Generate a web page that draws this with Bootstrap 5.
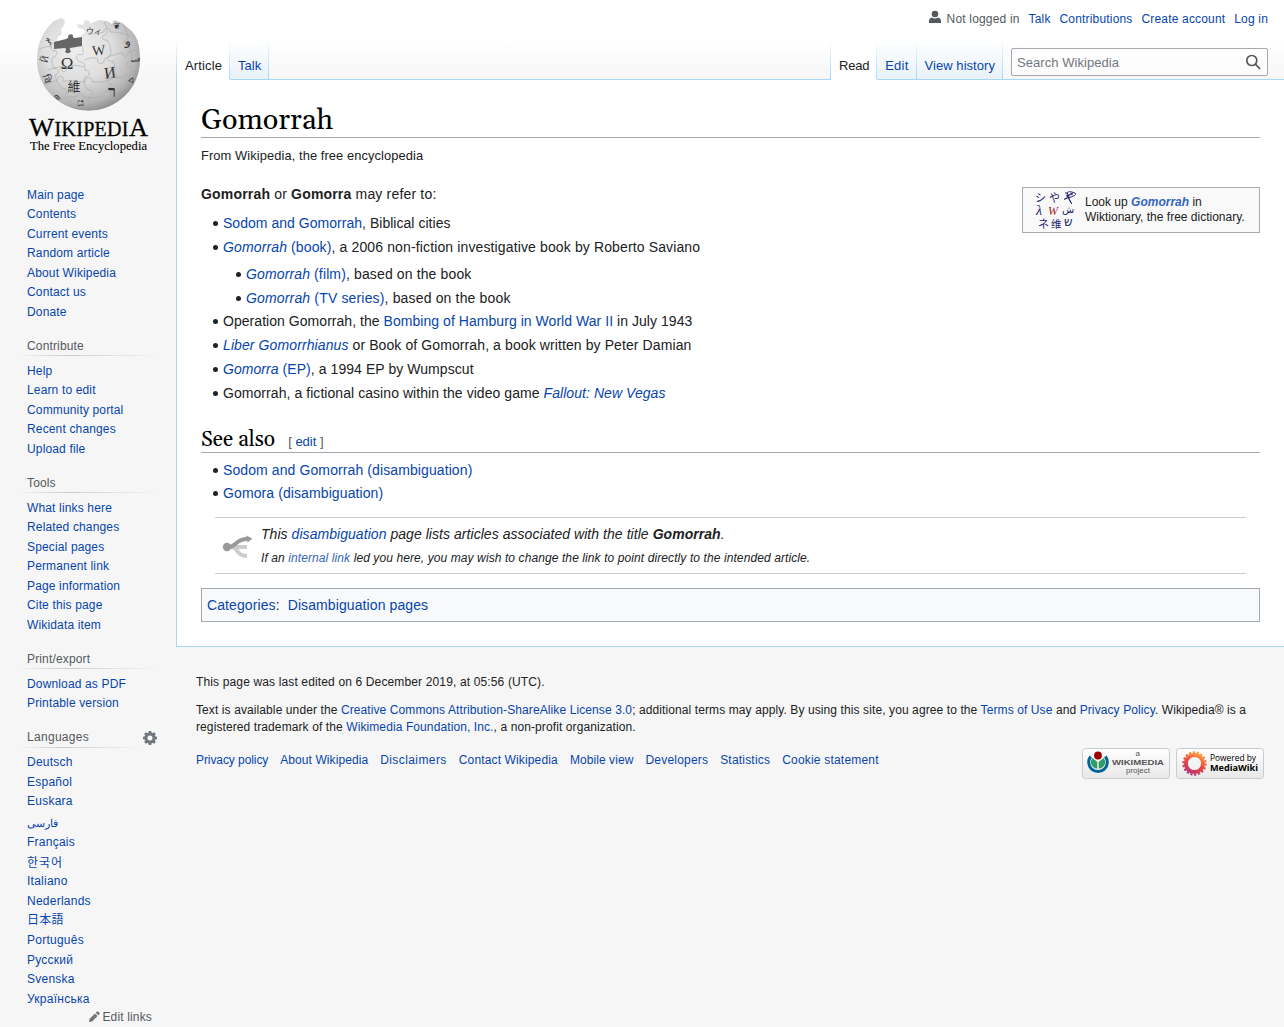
<!DOCTYPE html>
<html lang="en">
<head>
<meta charset="utf-8">
<title>Gomorrah - Wikipedia</title>
<link href="https://cdn.jsdelivr.net/npm/bootstrap@5.3.0/dist/css/bootstrap.min.css" rel="stylesheet">
<style>
body{font:12px/1.5 "Liberation Sans","Noto Sans CJK KR",sans-serif;color:#202122;background:#f6f6f6;height:1027px;overflow:hidden}
a{color:#0645ad;text-decoration:none}
ul{list-style:none;margin:0;padding:0}
.page{background:linear-gradient(#fff 50%,#f6f6f6 100%) 0 0/100% 80px no-repeat;height:1027px}
.side{width:176px;flex:none;letter-spacing:.15px}
.logo{display:block;width:176px;height:170px;letter-spacing:0}
.side-nav{padding-left:27px}
.side-nav.first{padding-top:15.700px}
.side-nav li{height:19.5px;line-height:13.5px;padding-top:3px;white-space:nowrap}
.side-nav h3{font-size:12px;line-height:13.5px;font-weight:400;color:#54595d;height:34px;padding-top:17.5px;margin:0 14px 5.5px -8px;padding-left:8px;background:linear-gradient(to right,rgba(200,204,209,0),#c8ccd1 33%,rgba(200,204,209,0)) 0 100%/100% 1px no-repeat}
.langs h3{letter-spacing:.3px}
.langs li{height:19.65px;letter-spacing:.25px}
.langs li.fa-row{height:20.8px;padding-top:4.500px;letter-spacing:0;font-size:10.500px}
.langs li.ko-row{letter-spacing:1px;padding-top:4px}
.gear{margin:17px 19px 0 0;width:14px;height:14px}
.editl{width:152px;line-height:13px;color:#54595d;padding-top:1px}
.head{height:80px;background:linear-gradient(#a7d7f9,#a7d7f9) 0 100%/100% 1px no-repeat}
.personal{height:40px;padding:12px 16px 0 0;gap:8.900px;line-height:14px;letter-spacing:.18px}
.user-ico{margin:-2px 4px 0 0}
.tabs{height:40px;font-size:13px;line-height:15px}
.tab-i{padding:18px 8px 0;height:39px;background:linear-gradient(rgba(167,215,249,0),#a7d7f9) 100% 0/1px 100% no-repeat,linear-gradient(#fff,#e8f2f8)}
.tab-i.on{height:40px;color:#202122;background:linear-gradient(rgba(167,215,249,0),#a7d7f9) 100% 0/1px 39px no-repeat,#fff}
.t-article{letter-spacing:.14px}.t-read{letter-spacing:-.25px}.t-edit{letter-spacing:.25px}.t-hist{letter-spacing:.05px}
.edge{width:1px;height:40px;background:linear-gradient(rgba(167,215,249,0),#a7d7f9)}
.find{width:257px;height:28px;margin:8px 16px 0 8px;border:1px solid #a2a9b1;border-radius:2px;background:rgba(255,255,255,.6);color:#72777d;padding:0 6px 0 5px;letter-spacing:.05px}
.article{background:#fff;border-left:1px solid #a7d7f9;border-bottom:1px solid #a7d7f9;padding:20px 24px 0;height:567px;font-size:14px;line-height:22.4px}
.article h1,.article h2{font-family:Gelasio,Georgia,"Liberation Serif",serif;font-weight:400;color:#000;border-bottom:1px solid #a2a9b1;margin:0}
.article h1{font-size:28.8px;line-height:41px;height:38px}
.article h2{font-size:21px;line-height:31px;height:28px;margin-top:19px}
.article h2 span{font:13px "Liberation Sans",sans-serif;color:#54595d;margin-left:13px}
.sub{font-size:12.9px;line-height:20px;margin-top:8px;letter-spacing:.08px}
.art ul,ul.art{margin:4.2px 0 0 22px}
.art ul ul{margin-left:23px}
ul.art{margin-top:6px}
.art ul.top-list{margin-top:7px}
.art li{margin-bottom:1.4px}
.art li::before{content:"";display:inline-block;width:5px;height:5px;border-radius:50%;background:#202122;margin:0 5px 0 -10px;vertical-align:2px}
.intro{padding-top:1px;letter-spacing:.18px}
.s3{letter-spacing:.03px}.s5{letter-spacing:.045px}.s6{letter-spacing:.06px}.s10{letter-spacing:.1px}.s13{letter-spacing:.13px}.s16{letter-spacing:.16px}
.wikt{width:238px;height:46px;border:1px solid #aaa;background:#f9f9f9;font-size:12px;line-height:15px;padding-left:11px;margin-top:5px}
.wikt svg{margin-right:9px}
.dab{margin:12px 14px 0;height:57px;border-top:1px solid #ccc;border-bottom:1px solid #ccc;padding:5px 0 0 7px;font-style:italic;letter-spacing:.05px}
.dab svg{margin:12px 7px 0 0}
.dab .hint{font-size:12px;line-height:26px;letter-spacing:.095px}
.soft{color:#36b}
.cats{margin-top:14px;height:34px;border:1px solid #a2a9b1;background:#f8f9fa;padding:5px;letter-spacing:.1px}
.foot{padding:27px 20px 0;line-height:16.8px;letter-spacing:.1px}
.foot p{margin:0 0 11px}
.foot p:first-child{letter-spacing:.14px}
.flinks{gap:12px;padding-top:6px;letter-spacing:.08px}
.flinks a:nth-child(1){letter-spacing:-.08px}
.flinks a:nth-child(3){letter-spacing:.42px}
.flinks a:nth-child(4){letter-spacing:.14px}
.flinks a:nth-child(n+6){letter-spacing:.2px}
.badges{margin-top:2px;letter-spacing:0}
</style>
<script src="https://cdn.jsdelivr.net/npm/bootstrap@5.3.0/dist/js/bootstrap.bundle.min.js"></script>
</head>
<body>
<div class="page d-flex">
<aside class="side">
<svg class="logo" viewBox="0 0 176 170">
<defs><radialGradient id="g" cx=".4" cy=".35" r=".72"><stop offset="0" stop-color="#efefef"/><stop offset=".45" stop-color="#dedede"/><stop offset=".78" stop-color="#b5b5b5"/><stop offset="1" stop-color="#777"/></radialGradient>
<clipPath id="c"><path d="M62 18l3 3-1 5-3 3 1 5-4 3-1 5-3 2 8 3 20-4-1-8 4-3-2-3-5-1-1-4 6 1 2-5 4 1 1 3 9-4 8 1 5 3 2-4 8 3 6 5C138 35 140 46 140 60A51.300 50.500 0 0 1 37 60C37 42 44 30 54 21z"/></clipPath></defs>
<g clip-path="url(#c)"><rect x="36" y="15" width="105" height="97" fill="url(#g)"/>
<g fill="none" stroke="#aaa" stroke-width=".6"><path d="M53 42c-3 6-2 8 0 9 5-2 5 6 0 6-3 5 0 9 1 12 5-2 6 5 1 6 1 6 4 10 7 14 5-2 7 3 3 6 3 5 8 9 13 12M82 46c1 4 2 7 0 9-6-3-8 5-1 7 3-1 4 3 4 8 6 0 5 8 0 7-3 6 1 10 3 13 6-1 6 5 1 7 0 6 3 9 5 13M104 22c3 5 4 9 2 13-5-1-5 6 1 5 4 6 4 11 4 15-6 1-4 8 2 6 3 6 2 12 0 17-6-1-6 6-1 7 0 7-3 14-7 20M122 22c4 7 6 12 6 17-5 0-5 6 0 6 4 6 4 11 3 16-6 0-5 7 0 6 0 7-2 12-5 17"/><path d="M38 50c5-3 9-4 14-3M48 70c5-2 8-3 13-3-2 6 7 6 6 0 5-3 12-1 17 0M84 60c6-2 10-3 14-1-3 6 8 6 6 0 7-3 13-6 19-6-2 5 7 4 5-1l11-3M42 87c6-4 11-6 15-6-1-6 8-6 6 0 8-1 15 1 22 1 0-6 9-5 7 0 8 0 14 0 20-3-2-6 6-7 6-1 7-2 12-4 18-7M57 101c8-4 14-5 19-4 0-5 8-4 7 0 8 1 14 1 21-1-1-5 6-6 7-1 6-2 12-5 18-10M88 33c6 2 11 0 16-1-1-5 7-5 6 0 8 0 14 1 20 4"/></g></g>
<path d="M54 42l12-3q3-1 2-3 2-3 5-1-1 3 2 3l7-1v9l-12 2q-1 2 1 3-2 4-6 1 2-3 0-4l-11 1z" fill="#666"/>
<g font-family="Liberation Serif,serif" fill="#333" text-anchor="middle"><text x="67" y="69" font-size="17">Ω</text><text x="99" y="55" font-size="14" transform="rotate(-5 99 55)">W</text><text x="110" y="78" font-size="16" transform="rotate(-8 110 72)">И</text><text x="74" y="91" font-size="13" font-family="Noto Sans CJK TC,sans-serif">維</text><text x="94" y="34" font-size="8" font-family="Noto Sans CJK JP,sans-serif">ウィ</text><text x="112" y="97" font-size="16" font-weight="bold">ר</text><text x="128" y="45" font-size="12">و</text><text x="117" y="29" font-size="9">❦</text><text x="48" y="43" font-size="10" transform="rotate(-35 48 40)">ჯ</text><text x="44" y="63" font-size="10" transform="rotate(-80 44 59)">Й</text><text x="46" y="82" font-size="10" transform="rotate(70 46 79)">वि</text><text x="80" y="106" font-size="10">ය</text><text x="134" y="64" font-size="10" transform="rotate(80 134 61)">វិ</text><text x="132" y="83" font-size="8" transform="rotate(-65 132 80)">ᐅ</text><text x="57" y="100" font-size="9" transform="rotate(40 57 98)">ወ</text></g>
<g font-family="Liberation Serif,serif" fill="#000" stroke="#000" stroke-width=".3"><text x="29" y="136" font-size="26" textLength="25" lengthAdjust="spacingAndGlyphs">W</text><text x="54.500" y="136" font-size="20" textLength="74" lengthAdjust="spacing">IKIPEDI</text><text x="129" y="136" font-size="26" textLength="19" lengthAdjust="spacingAndGlyphs">A</text><text x="30" y="150" font-size="13.500" stroke-width=".1" textLength="117" lengthAdjust="spacingAndGlyphs">The Free Encyclopedia</text></g>
</svg>
<nav class="side-nav first"><ul><li><a href="#">Main page</a></li><li><a href="#">Contents</a></li><li><a href="#">Current events</a></li><li><a href="#">Random article</a></li><li><a href="#">About Wikipedia</a></li><li><a href="#">Contact us</a></li><li><a href="#">Donate</a></li></ul></nav>
<nav class="side-nav"><h3>Contribute</h3><ul><li><a href="#">Help</a></li><li><a href="#">Learn to edit</a></li><li><a href="#">Community portal</a></li><li><a href="#">Recent changes</a></li><li><a href="#">Upload file</a></li></ul></nav>
<nav class="side-nav"><h3>Tools</h3><ul><li><a href="#">What links here</a></li><li><a href="#">Related changes</a></li><li><a href="#">Special pages</a></li><li><a href="#">Permanent link</a></li><li><a href="#">Page information</a></li><li><a href="#">Cite this page</a></li><li><a href="#">Wikidata item</a></li></ul></nav>
<nav class="side-nav"><h3>Print/export</h3><ul><li><a href="#">Download as PDF</a></li><li><a href="#">Printable version</a></li></ul></nav>
<nav class="side-nav langs"><div class="d-flex"><h3 class="flex-grow-1 me-0">Languages</h3><svg class="gear flex-shrink-0" viewBox="0 0 20 20"><g fill="#72777d"><path id="t" d="M8.200 0h3.600l1.200 5h-6zM8.200 20h3.600l1.200-5h-6z"/><use href="#t" transform="rotate(45 10 10)"/><use href="#t" transform="rotate(90 10 10)"/><use href="#t" transform="rotate(135 10 10)"/></g><circle cx="10" cy="10" r="5.600" fill="none" stroke="#72777d" stroke-width="4"/></svg></div>
<ul><li><a href="#">Deutsch</a></li><li><a href="#">Español</a></li><li><a href="#">Euskara</a></li><li class="fa-row"><a href="#">فارسی</a></li><li><a href="#">Français</a></li><li class="ko-row"><a href="#">한국어</a></li><li><a href="#">Italiano</a></li><li><a href="#">Nederlands</a></li><li><a href="#" lang="ja">日本語</a></li><li><a href="#">Português</a></li><li><a href="#">Русский</a></li><li><a href="#">Svenska</a></li><li><a href="#">Українська</a></li></ul></nav>
<div class="editl d-flex justify-content-end"><svg width="13" height="11" viewBox="0 0 13 11"><path d="M0 11l.6-3.200L6 2.400 8.600 5 3.200 10.400zM6.700 1.700L8 .4q.5-.5 1 0L10.600 2q.5.500 0 1L9.300 4.300z" fill="#72777d"/></svg><span>Edit links</span></div>
</aside>
<div class="flex-grow-1">
<header class="head">
<div class="personal d-flex justify-content-end"><span class="d-flex" style="color:#54595d"><svg class="user-ico" width="14" height="14" viewBox="0 0 14 14"><circle cx="6" cy="4" r="3.300" fill="#54595d"/><path d="M0 13v-2q0-3 3-3.500 3 2 6 0 3 .5 3 3.500V13z" fill="#54595d"/></svg>Not logged in</span><a href="#">Talk</a><a href="#">Contributions</a><a href="#">Create account</a><a href="#">Log in</a></div>
<div class="tabs d-flex"><span class="edge"></span><a href="#" class="tab-i on t-article">Article</a><a href="#" class="tab-i">Talk</a><span class="edge ms-auto"></span><a href="#" class="tab-i on t-read">Read</a><a href="#" class="tab-i t-edit">Edit</a><a href="#" class="tab-i t-hist">View history</a>
<div class="find d-flex align-items-center justify-content-between"><span>Search Wikipedia</span><svg width="16" height="16" viewBox="0 0 16 16" fill="none" stroke="#54595d" stroke-width="1.700"><circle cx="6.800" cy="6.500" r="5"/><path d="M10.400 10.200l4.600 4.600"/></svg></div></div>
</header>
<main class="article">
<h1>Gomorrah</h1>
<div class="sub">From Wikipedia, the free encyclopedia</div>
<div class="d-flex justify-content-between mt-3"><div class="art">
<p class="intro m-0"><b>Gomorrah</b> or <b>Gomorra</b> may refer to:</p>
<ul class="top-list"><li class="s3"><a href="#">Sodom and Gomorrah</a>, Biblical cities</li><li class="s13"><a href="#"><i>Gomorrah</i> (book)</a>, a 2006 non-fiction investigative book by Roberto Saviano<ul><li><a href="#"><i>Gomorrah</i> (film)</a>, based on the book</li><li class="s16"><a href="#"><i>Gomorrah</i> (TV series)</a>, based on the book</li></ul></li><li class="s5">Operation Gomorrah, the <a href="#">Bombing of Hamburg in World War II</a> in July 1943</li><li class="s10"><a href="#"><i>Liber Gomorrhianus</i></a> or Book of Gomorrah, a book written by Peter Damian</li><li class="s6"><a href="#"><i>Gomorra</i> (EP)</a>, a 1994 EP by Wumpscut</li><li class="s6">Gomorrah, a fictional casino within the video game <a href="#"><i>Fallout: New Vegas</i></a></li></ul></div>
<div class="wikt d-flex align-items-center"><svg width="42" height="40" viewBox="0 0 42 40"><g fill="#1b1b6b" font-size="11" font-family="Noto Sans CJK JP,DejaVu Sans,sans-serif"><text x="1" y="12">シ</text><text x="15" y="12">や</text><path d="M31 3q3-1 3 2t-3 4 6-2 1-5-3 7 1 2 3-8M32 6l7-2" fill="none" stroke="#1b1b6b" stroke-width=".9"/><text x="2" y="25" font-family="Liberation Serif,serif" font-size="14" font-style="italic">λ</text><text x="14" y="25" fill="#a02020" font-style="italic" font-family="Liberation Serif,serif" font-size="12">W</text><text x="28" y="23" font-size="10">ش</text><text x="4" y="38">ネ</text><text x="17" y="38" font-size="10.500">维</text><text x="30" y="36" font-size="12">ש</text></g></svg><div>Look up <b><i><a href="#" class="soft">Gomorrah</a></i></b> in<br>Wiktionary, the free dictionary.</div></div></div>
<h2>See also<span>[ <a href="#">edit</a> ]</span></h2>
<ul class="art s10"><li><a href="#">Sodom and Gomorrah (disambiguation)</a></li><li><a href="#">Gomora (disambiguation)</a></li></ul>
<div class="dab d-flex"><svg width="32" height="25" viewBox="0 0 32 25" class="flex-shrink-0"><path d="M9 12q4 0 7 5 3 4 9 4M11 12h14" fill="none" stroke="#ccc" stroke-width="4"/><path d="M4 12.500C14 13 13 4 25 4" fill="none" stroke="#999" stroke-width="4"/><circle cx="5" cy="12" r="4.200" fill="#999"/><path d="M24 .5l6.500 3-5 4z" fill="#999"/></svg><div>This <a href="#">disambiguation</a> page lists articles associated with the title <b>Gomorrah</b>.<div class="hint">If an <a href="#" class="soft">internal link</a> led you here, you may wish to change the link to point directly to the intended article.</div></div></div>
<div class="cats"><a href="#">Categories</a>: &nbsp;<a href="#">Disambiguation pages</a></div>
</main>
<footer class="foot">
<p>This page was last edited on 6 December 2019, at 05:56 (UTC).</p>
<p>Text is available under the <a href="#">Creative Commons Attribution-ShareAlike License 3.0</a>; additional terms may apply. By using this site, you agree to the <a href="#">Terms of Use</a> and <a href="#">Privacy Policy</a>. Wikipedia® is a registered trademark of the <a href="#">Wikimedia Foundation, Inc.</a>, a non-profit organization.</p>
<div class="d-flex justify-content-between"><div class="flinks d-flex"><a href="#">Privacy policy</a><a href="#">About Wikipedia</a><a href="#">Disclaimers</a><a href="#">Contact Wikipedia</a><a href="#">Mobile view</a><a href="#">Developers</a><a href="#">Statistics</a><a href="#">Cookie statement</a></div>
<svg class="badges" width="182" height="31" viewBox="0 0 182 31"><defs><linearGradient id="b" x2="0" y2="1"><stop stop-color="#fff"/><stop offset="1" stop-color="#e8e8e8"/></linearGradient><linearGradient id="s" gradientUnits="userSpaceOnUse" x1="118" y1="4" x2="108" y2="27"><stop stop-color="#fa4"/><stop offset=".5" stop-color="#f04a3e"/><stop offset="1" stop-color="#b2307a"/></linearGradient></defs><g fill="url(#b)" stroke="#c8ccd1"><rect x=".5" y=".5" width="87" height="30" rx="3"/><rect x="94.500" y=".5" width="87" height="30" rx="3"/></g>
<path d="M8.700 8.500a9.300 9.300 0 1 0 14.600 0" fill="none" stroke="#069" stroke-width="3"/><path d="M10.500 10a6.300 6.300 0 0 0 4.800 10.500V14zM21.500 10a6.300 6.300 0 0 1-4.800 10.500V14z" fill="#396"/><circle cx="16" cy="7.500" r="3.900" fill="#900"/>
<g font-family="Liberation Sans,sans-serif" fill="#555"><text x="53.500" y="8" font-size="8">a</text><text x="30" y="17" font-size="8" font-weight="700" textLength="52" lengthAdjust="spacingAndGlyphs">WIKIMEDIA</text><text x="44" y="25" font-size="8" textLength="24">project</text></g>
<circle cx="112.500" cy="15.500" r="8.600" fill="none" stroke="url(#s)" stroke-width="4"/><circle cx="112.500" cy="15.500" r="11.200" fill="none" stroke="url(#s)" stroke-width="2" stroke-dasharray="2.200 1.710"/>
<g font-family="Open Sans,sans-serif" fill="#000"><text x="128" y="13" font-size="8.500" textLength="46" lengthAdjust="spacingAndGlyphs">Powered by</text><text x="128" y="23" font-size="8.800" font-weight="700" textLength="48" lengthAdjust="spacingAndGlyphs">MediaWiki</text></g></svg></div>
</footer>
</div></div>
</body>
</html>
